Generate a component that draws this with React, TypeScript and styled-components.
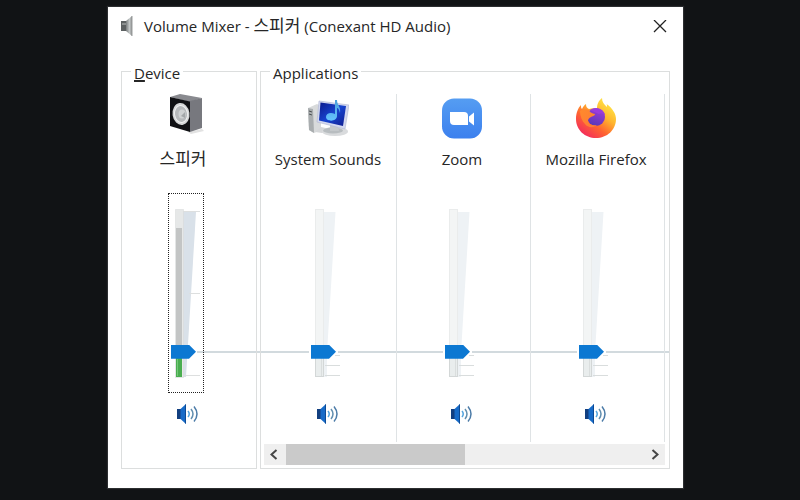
import React, { useState } from "react";
import styled, { createGlobalStyle } from "styled-components";

const GlobalStyle = createGlobalStyle`
  *, *::before, *::after { box-sizing: border-box; }
  body {
    margin: 0;
    background: #111315;
    color: #262626;
    font-family: "Open Sans", "Noto Sans CJK KR", sans-serif;
    font-size: 15px;
    line-height: 20px;
  }
`;

const Desktop = styled.main`
  min-height: 100vh;
  padding: 7px 117px 12px 108px;
`;

const MixerWindow = styled.section`
  background: #fff;
  padding: 0 13px 19px;
  box-shadow: 0 0 1px 1px #2c2e30;
`;

const TitleBar = styled.header`
  display: flex;
  align-items: center;
  gap: 11px;
  height: 40px;
`;

const Title = styled.h1`
  flex: 1;
  margin: 0;
  padding-bottom: 2px;
  font-size: 15px;
  font-weight: 400;
  white-space: nowrap;
`;

const Korean = styled.span`
  font-size: 17px;
`;

const IconButton = styled.button`
  display: grid;
  place-items: center;
  padding: 0;
  border: 0;
  background: transparent;
  cursor: pointer;
`;

const CloseButton = styled(IconButton)`
  width: 20px;
  height: 20px;
`;

const Panels = styled.div`
  display: grid;
  grid-template-columns: 136px minmax(0, 1fr);
  gap: 3px;
  margin-top: 12px;
  background: linear-gradient(#d2dade, #d2dade) 76px 292px / 100% 2px no-repeat;
`;

const Panel = styled.fieldset`
  min-width: 0;
  margin: 0;
  padding: 11px 0 3px;
  border: 1px solid #dcdede;
`;

const Legend = styled.legend`
  margin-left: 9px;
  padding: 4px 3px 0;
  line-height: 20px;
`;

const AccessKey = styled.span`
  text-decoration: underline;
  text-decoration-thickness: 2px;
`;

const ChannelRow = styled.div`
  display: grid;
  grid-template-columns: repeat(3, minmax(0, 1fr));
  padding: 0 4px 0 2px;
`;

const Channel = styled.div<{ $master?: boolean }>`
  display: flex;
  flex-direction: column;
  align-items: center;
  height: 348px;
  padding-right: ${(p) => (p.$master ? 6 : 3)}px;
  border-right: ${(p) => (p.$master ? "0" : "1px solid #dfe3e5")};
`;

const ChannelIcon = styled.div`
  height: 48px;
  svg { display: block; }
`;

const ChannelLabel = styled.label<{ $master?: boolean }>`
  height: 20px;
  margin-top: 7px;
  padding-right: ${(p) => (p.$master ? 6 : 0)}px;
  white-space: nowrap;
`;

const Fader = styled.div<{ $master?: boolean }>`
  display: grid;
  justify-items: start;
  align-items: center;
  width: ${(p) => (p.$master ? 36 : 40)}px;
  height: 200px;
  margin-top: 24px;
  outline: ${(p) => (p.$master ? "1px dotted #222" : "none")};
  outline-offset: -1px;
  > * { grid-area: 1 / 1; }
`;

const Slider = styled.input`
  appearance: none;
  writing-mode: vertical-lr;
  direction: rtl;
  width: 25px;
  height: 182px;
  margin: 0 0 0 3px;
  background: transparent;
  outline: none;
  cursor: pointer;

  &::-webkit-slider-runnable-track { width: 25px; background: transparent; }
  &::-webkit-slider-thumb {
    appearance: none;
    width: 25px;
    height: 14px;
    background: #0c78d2;
    clip-path: polygon(0 0, 72% 0, 100% 50%, 72% 100%, 0 100%);
  }
`;

const MuteButton = styled(IconButton)<{ $master?: boolean }>`
  height: 22px;
  margin-top: 10px;
  padding-left: ${(p) => (p.$master ? 3 : 0)}px;
`;

const ScrollBar = styled.div`
  display: grid;
  grid-template-columns: 22px minmax(0, 1fr) 22px;
  height: 21px;
  margin: 2px 4px 0 3px;
  background: #efefef;
`;

const ScrollThumb = styled.div`
  width: 50%;
  background: #cacaca;
`;

function TitleSpeakerIcon() {
  return (
    <svg width="12" height="24" viewBox="0 0 12 24" aria-hidden="true">
      <defs>
        <linearGradient id="cone" x1="0" x2="1">
          <stop offset="0" stopColor="#777b7c" />
          <stop offset=".6" stopColor="#c6caca" />
          <stop offset="1" stopColor="#858888" />
        </linearGradient>
      </defs>
      <path d="M0 6h6v10H0z" fill="#5c6061" />
      <path d="M1 8h4v2H1z" fill="#8c9090" />
      <path d="M5 6l6-5v20L5 16z" fill="url(#cone)" />
      <path d="M11 1v20" stroke="#9a9d9d" />
    </svg>
  );
}

function DeviceIcon() {
  return (
    <svg width="40" height="48" viewBox="0 0 40 48" aria-hidden="true">
      <path d="M22 38l14-3 2 2-13 3z" fill="#e2e2e2" />
      <path d="M4 3L14 0l22 4-12 4z" fill="#898a8f" />
      <path d="M24 7l12-3v30l-12 4z" fill="#77787e" />
      <path d="M4 3l20 4.500V38L4 32z" fill="#101114" />
      <ellipse cx="15" cy="20" rx="8.500" ry="11" fill="#d5d7d8" transform="rotate(-8 15 20)" />
      <ellipse cx="15" cy="20" rx="6.500" ry="8.500" fill="#b7babc" stroke="#eff0f0" transform="rotate(-8 15 20)" />
      <ellipse cx="16" cy="20" rx="3.500" ry="4.500" fill="#cfd2d3" />
      <path d="M15 22l4-4v6z" fill="#a3a7a9" />
    </svg>
  );
}

function SystemSoundsIcon() {
  return (
    <svg width="42" height="48" viewBox="0 0 42 48" aria-hidden="true">
      <defs>
        <linearGradient id="screen" x1="0" x2="1" y1="0" y2="1">
          <stop offset="0" stopColor="#0c1a8c" />
          <stop offset=".5" stopColor="#1744cf" />
          <stop offset="1" stopColor="#101d8f" />
        </linearGradient>
        <linearGradient id="note" x1="0" x2="0" y1="0" y2="1">
          <stop offset="0" stopColor="#4a9fda" />
          <stop offset="1" stopColor="#65c3ff" />
        </linearGradient>
      </defs>
      <path d="M1 14l9-4 4 2v24l-7 3-5-3z" fill="#d8dadb" />
      <path d="M1 14l5 1 1 24-5-3z" fill="#a9adaf" />
      <path d="M2 17l3 1M2 20l3 1" stroke="#4c5052" />
      <path d="M14 33l9 2-8 4-7-1z" fill="#d5d7d9" />
      <ellipse cx="28" cy="37.500" rx="13" ry="4.500" fill="#d9dbdd" />
      <ellipse cx="26" cy="36.500" rx="10" ry="3" fill="#b8bdc0" />
      <path d="M23 30l8 2 1 5h-9z" fill="#c4c8cb" />
      <path d="M12 7l30 4-4 24-28-7z" fill="#d3d8ef" stroke="#aeb5d2" strokeWidth=".6" />
      <path d="M13.500 8.500L39 12l-3 20-24-5.500z" fill="url(#screen)" />
      <path d="M28 6h2c0 5 4 6 3 13-1-4-2-5-3-5v8c0 6-11 6-11 1 0-4 5-5 9-3z" fill="url(#note)" />
    </svg>
  );
}

function ZoomIcon() {
  return (
    <svg width="40" height="48" viewBox="0 0 40 48" aria-hidden="true">
      <defs>
        <linearGradient id="zoom" x1="0" x2="0" y1="0" y2="1">
          <stop offset="0" stopColor="#559df2" />
          <stop offset="1" stopColor="#3c80ee" />
        </linearGradient>
      </defs>
      <rect y="4.500" width="40" height="40" rx="12" fill="url(#zoom)" />
      <path d="M8 18h14q4 0 4 4v9H12q-4 0-4-4z" fill="#fff" />
      <path d="M27 22.500l5-4v13l-5-4z" fill="#fff" />
    </svg>
  );
}

function FirefoxIcon() {
  return (
    <svg width="40" height="48" viewBox="0 0 40 48" aria-hidden="true">
      <defs>
        <linearGradient id="flame" x1=".85" y1=".1" x2=".2" y2=".95">
          <stop offset="0" stopColor="#ffe846" />
          <stop offset=".35" stopColor="#ffb52e" />
          <stop offset=".65" stopColor="#ff6430" />
          <stop offset="1" stopColor="#f32b5e" />
        </linearGradient>
        <linearGradient id="globe" x1=".7" y1="0" x2=".3" y2="1">
          <stop offset="0" stopColor="#a23bd6" />
          <stop offset="1" stopColor="#5638b8" />
        </linearGradient>
        <linearGradient id="tail" x1="0" y1="0" x2="1" y2="1">
          <stop offset="0" stopColor="#ff8a2c" />
          <stop offset="1" stopColor="#ff7a35" />
        </linearGradient>
      </defs>
      <path d="M26 4c0 4 2 6 5 9 0-2 0-2-.500-3 6 4 9.500 10 9.500 15C40 36 31 44 20 44S0 36 0 25c0-6 2-11 5-14 0 2 0 3 1 4 1-2 2-4 4-5 0 3 1 4 3 5 3-1 5-1 8 0 0-4 1-8 5-11z" fill="url(#flame)" />
      <circle cx="20" cy="23" r="9" fill="url(#globe)" />
      <path d="M14 16c6-4 14-1 15 5-3-2-5-2-6-1z" fill="#9a3cdb" />
      <path d="M4 17c3-2 6-2 9-1 1 3 3 3 6 4 0 2-3 2-4 3-2 1-3 2-3 4 1 4 5 5 9 4-3 3-9 3-12-1-3-3-5-8-5-13z" fill="url(#tail)" />
    </svg>
  );
}

function VolumeIcon() {
  return (
    <svg width="22" height="22" viewBox="0 0 22 22" aria-hidden="true">
      <path d="M0 6h4.500v10H0z" fill="#123f80" />
      <path d="M3.500 6L9 1v20l-5.500-5z" fill="#176bc8" />
      <path d="M8.500 1.500v19" stroke="#0d4a94" />
      <path d="M11 8q2.500 3 0 6" fill="none" stroke="#55a5df" strokeWidth="1.500" />
      <path d="M14 6q4 5 0 10" fill="none" stroke="#628fb0" strokeWidth="1.500" />
      <path d="M17 3.500q6 7.500 0 15" fill="none" stroke="#4d7ca8" strokeWidth="1.500" />
    </svg>
  );
}

function MasterScale() {
  return (
    <svg width="36" height="200" viewBox="0 0 36 200" aria-hidden="true">
      <path d="M15 19h13L18 184h-3z" fill="#d9e1e9" />
      <path d="M15 18.500h17M21 100.500h11M16 182.500h16" stroke="#dddfdf" />
      <rect x="7.500" y="16.500" width="8" height="168" fill="#e6e8e8" stroke="#d7d9d9" strokeDasharray="1 1" />
      <rect x="8" y="35" width="6" height="125" fill="#c3c5c5" />
      <rect x="8" y="160" width="6" height="24" fill="#4aae50" />
      <path d="M9.500 166v17" stroke="#74c778" />
    </svg>
  );
}

function AppScale() {
  return (
    <svg width="36" height="200" viewBox="0 0 36 200" aria-hidden="true">
      <path d="M1 157h29v4H1z" fill="#fff" />
      <path d="M16 19h11.500L19 160v24h-3z" fill="#eef2f5" />
      <path d="M27 162.500h5M17 172.500h15M17 182.500h15" stroke="#d9dddd" />
      <rect x="7.500" y="16.500" width="8" height="150" fill="#f3f5f5" stroke="#eaecec" />
      <rect x="7.500" y="160.500" width="8" height="23" fill="#e9eded" stroke="#d3d7d7" />
      <path d="M13.500 161v22" stroke="#dadede" />
    </svg>
  );
}

function Chevron({ left }: { left?: boolean }) {
  return (
    <svg width="12" height="12" viewBox="0 0 12 12" aria-hidden="true">
      <path d={left ? "M7.500 1L2.500 5.500l5 4.500" : "M4.500 1l5 4.500-5 4.500"} fill="none" stroke="#464646" strokeWidth="2" />
    </svg>
  );
}

interface ChannelProps {
  id: string;
  name: React.ReactNode;
  muteLabel: string;
  icon: React.ReactNode;
  master?: boolean;
}

function VolumeChannel({ id, name, muteLabel, icon, master }: ChannelProps) {
  const [level, setLevel] = useState(15);
  return (
    <Channel $master={master}>
      <ChannelIcon>{icon}</ChannelIcon>
      <ChannelLabel htmlFor={id} $master={master}>{name}</ChannelLabel>
      <Fader $master={master}>
        {master ? <MasterScale /> : <AppScale />}
        <Slider
          id={id}
          type="range"
          min={0}
          max={100}
          value={level}
          onChange={(e) => setLevel(Number(e.target.value))}
        />
      </Fader>
      <MuteButton type="button" aria-label={muteLabel} $master={master}>
        <VolumeIcon />
      </MuteButton>
    </Channel>
  );
}

const applications = [
  { id: "system", name: "System Sounds", muteLabel: "Mute System Sounds", icon: <SystemSoundsIcon /> },
  { id: "zoom-app", name: "Zoom", muteLabel: "Mute Zoom", icon: <ZoomIcon /> },
  { id: "firefox", name: "Mozilla Firefox", muteLabel: "Mute Mozilla Firefox", icon: <FirefoxIcon /> },
];

export default function App() {
  return (
    <>
      <GlobalStyle />
      <Desktop>
        <MixerWindow>
          <TitleBar>
            <TitleSpeakerIcon />
            <Title>Volume Mixer - <Korean lang="ko">스피커</Korean> (Conexant HD Audio)</Title>
            <CloseButton type="button" aria-label="Close">
              <svg width="14" height="14" viewBox="0 0 14 14" aria-hidden="true">
                <path d="M1 0l12 12M13 0L1 12" stroke="#222" strokeWidth="1.300" />
              </svg>
            </CloseButton>
          </TitleBar>
          <Panels>
            <Panel>
              <Legend><AccessKey>D</AccessKey>evice</Legend>
              <VolumeChannel
                id="speaker"
                name={<Korean lang="ko">스피커</Korean>}
                muteLabel="Mute 스피커"
                icon={<DeviceIcon />}
                master
              />
            </Panel>
            <Panel>
              <Legend>Applications</Legend>
              <ChannelRow>
                {applications.map((app) => (
                  <VolumeChannel key={app.id} {...app} />
                ))}
              </ChannelRow>
              <ScrollBar>
                <IconButton type="button" aria-label="Scroll left"><Chevron left /></IconButton>
                <ScrollThumb />
                <IconButton type="button" aria-label="Scroll right"><Chevron /></IconButton>
              </ScrollBar>
            </Panel>
          </Panels>
        </MixerWindow>
      </Desktop>
    </>
  );
}
